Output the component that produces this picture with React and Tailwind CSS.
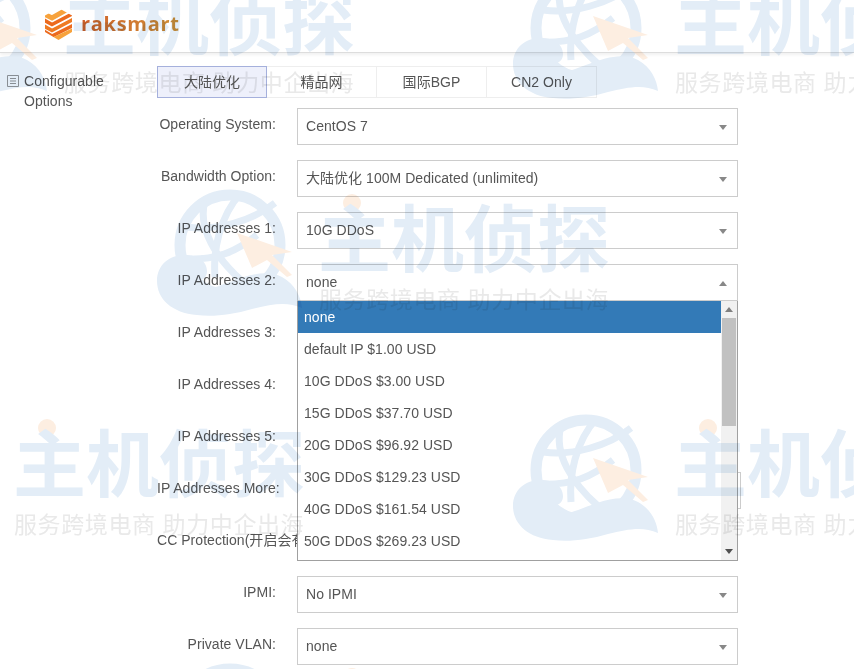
import React from "react";

const font = { fontFamily: '"Liberation Sans", "Noto Sans CJK SC", Arial, sans-serif' };

const tabs = ["大陆优化", "精品网", "国际BGP", "CN2 Only"];

const rows = [
    { label: "Operating System:", value: "CentOS 7" },
    { label: "Bandwidth Option:", value: "大陆优化 100M Dedicated (unlimited)" },
    { label: "IP Addresses 1:", value: "10G DDoS" },
    { label: "IP Addresses 2:", value: "none", open: true },
    { label: "IP Addresses 3:", value: "none" },
    { label: "IP Addresses 4:", value: "none" },
    { label: "IP Addresses 5:", value: "none" },
    { label: "IP Addresses More:", value: "none", wide: true },
    { label: "CC Protection(开启会有", value: "none" },
    { label: "IPMI:", value: "No IPMI" },
    { label: "Private VLAN:", value: "none" },
];

const options = [
    "none",
    "default IP $1.00 USD",
    "10G DDoS $3.00 USD",
    "15G DDoS $37.70 USD",
    "20G DDoS $96.92 USD",
    "30G DDoS $129.23 USD",
    "40G DDoS $161.54 USD",
    "50G DDoS $269.23 USD",
];

function Caret({ up, className }) {
    return (
        <svg width="8" height="5" viewBox="0 0 8 5" className={className}>
            <path d={up ? "M4 0L8 5H0Z" : "M0 0H8L4 5Z"} fill="currentColor" />
        </svg>
    );
}

function Logo() {
    return (
        <svg width="29" height="32" viewBox="0 0 29 32">
            <clipPath id="hex">
                <path d="M14.5 0L28 7.5V24L14.5 32L1 24V7.5Z" />
            </clipPath>
            <g clipPath="url(#hex)" fill="none" strokeWidth="3.6">
                <path d="M0 6L8 10L22 2" stroke="#f7a23c" strokeWidth="5" />
                <path d="M0 12L8 16.5L30 5" stroke="#ec6a1e" />
                <path d="M0 18L8 22.5L30 11" stroke="#ef7a22" />
                <path d="M-2 22L8 28L30 17" stroke="#ec6a1e" />
                <path d="M8 33L30 23" stroke="#f7a23c" strokeWidth="6" />
            </g>
        </svg>
    );
}

function Globe() {
    return (
        <svg width="147" height="128" viewBox="0 0 147 128" className="absolute left-0 top-0">
            <circle cx="73" cy="56" r="50" fill="none" stroke="#e3edf7" strokeWidth="11" />
            <path d="M30 38C60 42 95 32 118 14M24 70C60 72 80 62 100 46" fill="none" stroke="#e3edf7" strokeWidth="7" />
            <path d="M48 12C40 40 60 70 85 92M84 4C62 28 56 62 58 88" fill="none" stroke="#e3edf7" strokeWidth="7" />
            <path
                d="M0 92C0 76 12 66 28 66C40 66 50 72 50 82C50 90 42 94 38 88C34 92 40 100 52 99C65 100 100 75 125 88C138 95 144 108 145 119C130 112 115 115 95 120C75 126 55 128 40 126C15 124 0 110 0 92Z"
                fill="#e3edf7"
            />
            <path d="M80 44L135 63L115 66L135 86L130 88L110 71L95 79Z" fill="#fdeee1" />
        </svg>
    );
}

// one repeated watermark tile, painted over the page
function Mark({ className }) {
    return (
        <div className={"absolute w-[460px] h-[130px] " + className}>
            <Globe />
            <div className="absolute left-[186px] top-[5px] w-[18px] h-[18px] rounded-full bg-[#fdeee1]"></div>
            <div className="absolute left-[161px] top-[12px] text-[73px] leading-[80px] font-bold whitespace-nowrap text-[#e3edf7]">
                主机侦探
            </div>
            <div className="absolute left-[162px] top-[97px] text-[23px] leading-[28px] tracking-[0.6px] whitespace-nowrap text-[#e9e9e9]">
                服务跨境电商 助力中企出海
            </div>
        </div>
    );
}

function Dropdown() {
    return (
        <div className="absolute left-0 top-[37px] z-10 w-full h-[260px] flex bg-white border-l border-r border-b border-[#a0a0a0] text-[#555]">
            <div className="flex-1 min-w-0">
                {options.map((o, i) => (
                    <div
                        key={o}
                        className={
                            "h-8 pl-[6px] leading-8 " +
                            (i === 0 ? "bg-[#337ab7] text-white" : "")
                        }
                    >
                        {o}
                    </div>
                ))}
            </div>
            <div className="w-4 flex flex-col items-center bg-[#f1f1f1]">
                <div className="h-[17px] flex items-center justify-center text-[#808080]">
                    <Caret up />
                </div>
                <div className="w-[14px] h-[108px] bg-[#c1c1c1]"></div>
                <div className="mt-auto h-[17px] flex items-center justify-center text-[#505050]">
                    <Caret />
                </div>
            </div>
        </div>
    );
}

function Row({ label, value, open, wide }) {
    return (
        <div className="flex gap-[21px]">
            <div className="w-[119px] pt-[6px] text-right whitespace-nowrap">{label}</div>
            <div className={"relative h-[37px] " + (wide ? "w-[444px]" : "w-[441px]")}>
                <div className="h-full flex items-center justify-between pl-2 pr-[10px] pb-[2px] bg-white border border-[#ccc]">
                    <span>{value}</span>
                    <Caret up={open} className="mt-[3px] text-[#888]" />
                </div>
                {open && <Dropdown />}
            </div>
        </div>
    );
}

export default function App() {
    return (
        <div className="relative w-[854px] h-[669px] overflow-hidden bg-white text-sm tracking-[0.04px] text-[#555]" style={font}>
            <div className="h-[53px] flex items-center pl-[44px] gap-[8px] pb-[4px] border-b border-[#ddd] shadow-[0_2px_3px_rgba(0,0,0,0.06)]">
                <Logo />
                <span
                    className="text-[20px] font-bold tracking-[0.7px] bg-gradient-to-r from-[#cf5f2a] to-[#cf9038] bg-clip-text text-transparent"
                    style={{ fontFamily: '"Open Sans", sans-serif' }}
                >
                    raksmart
                </span>
            </div>

            <div className="flex">
                <div className="w-[157px] shrink-0 flex gap-[5px] pl-[7px] pt-[18px] leading-5">
                    <svg width="12" height="12" viewBox="0 0 12 12" className="mt-1 shrink-0 text-[#999]">
                        <path d="M.5.5h11v11H.5zM3 3.5h6M3 6h6M3 8.5h6" fill="none" stroke="currentColor" />
                    </svg>
                    <div>
                        Configurable
                        <br />
                        Options
                    </div>
                </div>

                <div className="pt-[13px]">
                    <div className="flex mb-[10px]">
                        {tabs.map((t, i) => (
                            <div
                                key={t}
                                className={
                                    "w-[110px] h-[32px] flex items-center justify-center border " +
                                    (i === 0
                                        ? "bg-[#eef0fb] border-[#a5b0dc]"
                                        : "border-[#eee] border-l-0")
                                }
                            >
                                {t}
                            </div>
                        ))}
                    </div>
                    <div className="flex flex-col gap-[15px]">
                        {rows.map((r) => (
                            <Row key={r.label} {...r} />
                        ))}
                    </div>
                </div>
            </div>

            <div className="absolute inset-0 z-20 pointer-events-none mix-blend-multiply">
                <Mark className="left-[-98px] top-[-28px]" />
                <Mark className="left-[513px] top-[-28px]" />
                <Mark className="left-[157px] top-[189px]" />
                <Mark className="left-[-148px] top-[414px]" />
                <Mark className="left-[513px] top-[414px]" />
                <Mark className="left-[157px] top-[663px]" />
            </div>
        </div>
    );
}
